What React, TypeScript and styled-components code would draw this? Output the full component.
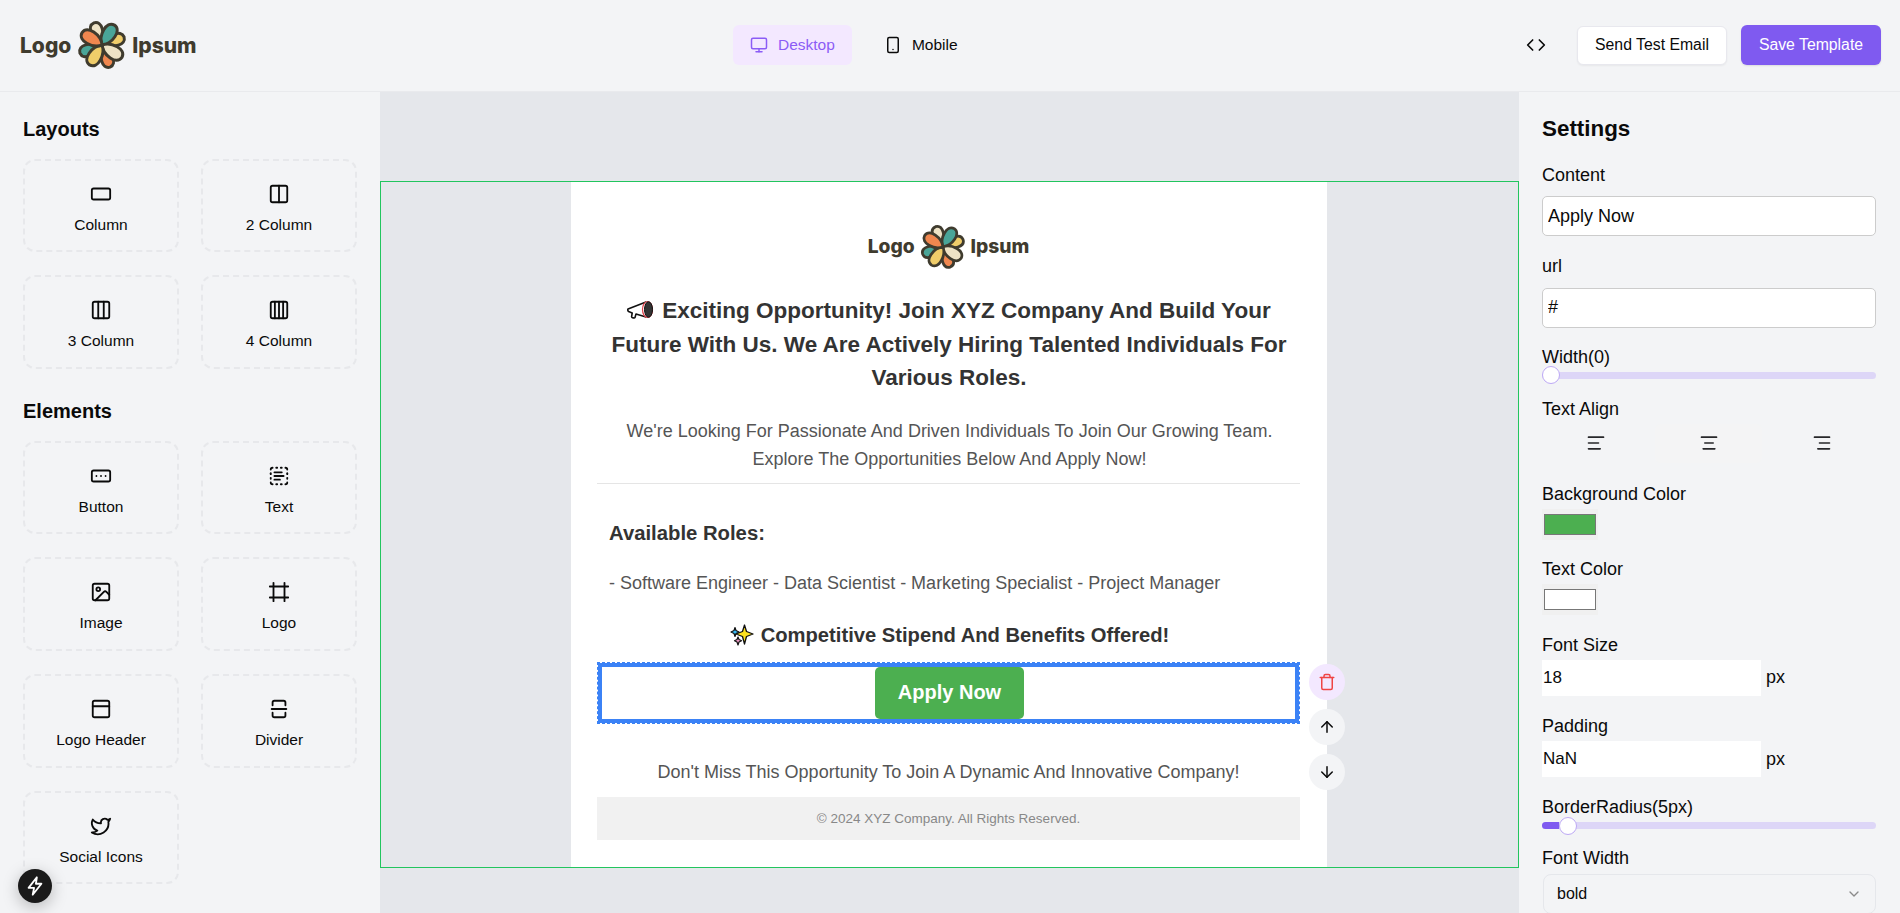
import React from "react";
import styled, { createGlobalStyle } from "styled-components";
import {
  RectangleHorizontal, Columns2, Columns3, Columns4, RectangleEllipsis, TextSelect, Image, Frame,
  PanelTop, SquareSplitVertical, Twitter, Monitor, Smartphone, Code, AlignLeft, AlignCenter, AlignRight,
  Trash, ArrowUp, ArrowDown, ChevronDown,
} from "lucide-react";

const Global = createGlobalStyle`
  html, body { margin: 0; padding: 0; height: 100%; overflow: hidden; }
  body { font-family: "Liberation Sans", Arial, sans-serif; color: #0a0a0a; background: #f3f4f6; }
  * { box-sizing: border-box; }
`;

const Page = styled.div`height: 913px; display: flex; flex-direction: column; overflow: hidden;`;
const Header = styled.header`
  height: 92px; flex: none; display: flex; justify-content: space-between; align-items: center;
  padding: 0 19px 1px 20px; background: #f3f4f6; border-bottom: 1px solid #e9eaed;
`;
const DeviceGroup = styled.div`display: flex; gap: 14px; margin-right: 15px;`;
const DeviceButton = styled.button<{ $active?: boolean }>`
  height: 40px; padding: 0 17.5px; display: flex; align-items: center; gap: 10px; border: 0; border-radius: 6px;
  font: 15.5px "Liberation Sans", Arial, sans-serif;
  background: ${(p) => (p.$active ? "#f3e8ff" : "transparent")};
  color: ${(p) => (p.$active ? "#8b5cf6" : "#0a0a0a")};
`;
const Actions = styled.div`display: flex; align-items: center; justify-content: flex-end;`;
const IconOnly = styled.div`display: flex; margin-right: 31px; color: #0a0a0a;`;
const OutlineButton = styled.button`
  width: 150px; height: 39px; margin-right: 14px; padding: 0; background: #fff; border: 1px solid #e8e8ee; border-radius: 6px;
  font: 15.8px "Liberation Sans", Arial, sans-serif; color: #0a0a0a; box-shadow: 0 1px 2px rgba(0,0,0,.05);
`;
const PrimaryButton = styled.button`
  width: 140px; height: 40px; padding: 0; background: #7f5af0; border: 0; border-radius: 6px; color: #fff;
  font: 15.8px "Liberation Sans", Arial, sans-serif; box-shadow: 0 1px 2px rgba(0,0,0,.1);
`;

const LogoWrap = styled.div<{ $scale: number }>`
  display: flex; align-items: center; gap: ${(p) => 5.5 * p.$scale}px;
  font-family: Inter, sans-serif; font-weight: 800; color: #3f3b2e;
  font-size: ${(p) => 21 * p.$scale}px; line-height: 1;
`;
const big = "M0 0C-8 -6 -9.5 -23 0 -23.5C9.5 -23 8 -6 0 0Z";
const small = "M0 -4C-7 -9 -8.5 -23 0 -23.500C8.500 -23 7 -9 0 -4Z";
const Flower = ({ size }: { size: number }) => (
  <svg width={size} height={size} viewBox="-25 -25 50 50" aria-hidden="true">
    {[[-20, "#eee3c6"], [70, "#f0cd6a"], [160, "#f0874f"], [250, "#4aa598"]].map(([r, c]) => (
      <path key={String(r)} d={small} fill={String(c)} stroke="#3f3b2e" strokeWidth="3" strokeLinejoin="round" transform={`rotate(${r})`} />
    ))}
    {[[32, "#4aa598"], [122, "#eee3c6"], [212, "#f0cd6a"], [302, "#f0874f"]].map(([r, c]) => (
      <path key={String(r)} d={big} fill={String(c)} stroke="#3f3b2e" strokeWidth="3" strokeLinejoin="round" transform={`rotate(${r})`} />
    ))}
  </svg>
);
const Logo = ({ scale }: { scale: number }) => (
  <LogoWrap $scale={scale}>
    <span>Logo</span>
    <Flower size={50 * scale} />
    <span>Ipsum</span>
  </LogoWrap>
);

const Body = styled.div`flex: 1; display: flex; min-height: 0;`;
const LeftPanel = styled.aside`width: 380px; flex: none; padding: 24.5px 23px 0; background: #f3f4f6; overflow: hidden;`;
const SectionTitle = styled.h2`margin: 0 0 18px; font-size: 20px; line-height: 24px; font-weight: 700;`;
const CardGrid = styled.div`
  display: grid; grid-template-columns: 156px 156px; grid-auto-rows: 93.5px; column-gap: 22px; row-gap: 23.2px;
  margin-bottom: 30px;
`;
const Card = styled.div`
  display: flex; flex-direction: column; align-items: center; gap: 11px; padding-top: 22px;
  border: 2px dashed #e7e8eb; border-radius: 12px; font-size: 15.5px; line-height: 18px; color: #0a0a0a;
`;
const IconBox = styled.span`display: flex; height: 22px;`;

const Canvas = styled.main`flex: 1; min-width: 0; padding-top: 89px; background: #e5e7eb;`;
const Frame1 = styled.div`height: 687px; border: 1px solid #22c55e; display: flex; justify-content: center;`;
const Email = styled.div`width: 756px; margin-left: -1px; background: #fff; padding: 42px 27px 0 26px; display: flex; flex-direction: column;`;
const EmailLogo = styled.div`display: flex; justify-content: center; height: 46px; margin-bottom: 24px; align-items: center;`;
const Headline = styled.h1`
  margin: 0 0 22px; padding: 0 12px 0 13px; font-size: 22.5px; line-height: 33.5px; font-weight: 700; color: #333;
  text-align: center;
`;
const Sub = styled.p`margin: 0; padding: 0 10px 0 12px; font-size: 18px; line-height: 28px; color: #555; text-align: center;`;
const Rule = styled.hr`margin: 10px 0 0; height: 1px; border: 0; background: #e5e5e5;`;
const RolesTitle = styled.h3`margin: 37px 0 0; padding-left: 12px; font-size: 20.3px; line-height: 24px; color: #333; font-weight: 700;`;
const RolesText = styled.p`margin: 26px 0 0; padding-left: 12px; font-size: 18px; line-height: 24px; color: #555;`;
const Stipend = styled.h3`margin: 28px 0 0; padding-left: 2px; font-size: 20.2px; line-height: 24px; font-weight: 700; color: #333; text-align: center; display: flex; justify-content: center; align-items: center; gap: 7px;`;
const Selected = styled.div`
  position: relative; margin-top: 15px; height: 62px; border: 1px dashed #3b82f6;
  display: flex;
`;
const SelectedInner = styled.div`flex: 1; border: 4px solid #3b82f6; display: flex; justify-content: center;`;
const CtaButton = styled.a`
  width: 149px; height: 52px; margin-left: 2px; display: flex; align-items: center; justify-content: center; background: #4caf50;
  color: #fff; font-size: 20px; font-weight: 700; border-radius: 5px; text-decoration: none;
`;
const SideTools = styled.div`position: absolute; left: 711px; top: 1px; display: flex; flex-direction: column; gap: 9px;`;
const RoundTool = styled.button<{ $danger?: boolean }>`
  width: 36px; height: 36px; border-radius: 50%; border: 0; padding: 0; display: flex; align-items: center; justify-content: center;
  background: ${(p) => (p.$danger ? "#f3e8ff" : "#f3f4f6")}; color: ${(p) => (p.$danger ? "#ef4444" : "#0a0a0a")};
`;
const Closing = styled.p`margin: 36px 0 0; font-size: 18px; line-height: 24px; color: #555; text-align: center;`;
const Copyright = styled.div`
  margin-top: 13px; height: 43px; background: #f1f1f1; color: #888; font-size: 13.5px; display: flex; align-items: center; justify-content: center;
`;

const RightPanel = styled.aside`width: 381px; flex: none; padding: 23px 24px 0 23px; background: #f3f4f6; overflow: hidden;`;
const SettingsTitle = styled.h2`margin: 0 0 21.5px; font-size: 22.4px; line-height: 28px; font-weight: 700;`;
const Field = styled.div<{ $gap: number }>`margin-bottom: ${(p) => p.$gap}px;`;
const Label = styled.div`font-size: 18px; line-height: 21px; color: #0a0a0a;`;
const TextInput = styled.input`
  display: block; width: 334px; height: 40px; margin-top: 10.5px; padding: 0 5px; border: 1px solid #ccc; border-radius: 5px;
  background: #fff; font: 18px "Liberation Sans", Arial, sans-serif; color: #0a0a0a;
`;
const SliderTrack = styled.div`position: relative; width: 334px; height: 7px; margin-top: 4px; border-radius: 4px; background: #ddd6f7;`;
const SliderFill = styled.div`height: 100%; border-radius: 4px 0 0 4px; background: #7f5af0;`;
const SliderThumb = styled.div`
  position: absolute; top: -5.5px; width: 18px; height: 18px; border-radius: 50%; background: #fff; border: 1px solid #bda9f5;
  transform: translateX(-50%);
`;
const AlignRow = styled.div`display: grid; grid-template-columns: repeat(3, 107px); column-gap: 6px; margin-top: 3.5px;`;
const AlignCell = styled.div<{ $active?: boolean }>`
  height: 39px; display: flex; align-items: center; justify-content: center; border-radius: 6px; color: #27272a;
  background: ${(p) => (p.$active ? "#f4f4f5" : "transparent")};
`;
const ColorInput = styled.input`
  display: block; width: 56px; height: 31px; margin-top: 4px; padding: 1px 0; border: 0; background: #f0f0f0;
`;
const NumberRow = styled.div`display: flex; align-items: center; gap: 5px; margin-top: 4px; font-size: 18px;`;
const NumberInput = styled.input`
  width: 219px; height: 36px; padding: 0 1px; border: 0; background: #fff; font: 17px "Liberation Sans", Arial, sans-serif; color: #0a0a0a;
`;
const SelectBox = styled.div`
  width: 333px; height: 40px; margin: 5px 0 0 1px; padding: 0 13px; display: flex; align-items: center; justify-content: space-between;
  border: 1px solid #e5e7eb; border-radius: 8px; font-size: 16px; color: #0a0a0a;
`;
const Badge = styled.div`
  position: fixed; left: 18px; bottom: 10px; width: 34px; height: 34px; border-radius: 50%; background: #1a1a1a;
  display: flex; align-items: center; justify-content: center; box-shadow: 0 4px 16px rgba(0,0,0,.25);
`;

const Megaphone = () => (
  <svg width="27" height="20" viewBox="0 0 27 20" aria-hidden="true" style={{ verticalAlign: -2, marginRight: 8 }}>
    <path d="M1 9 19 2v15L9 14l-1 3.5c-.4 1-3.4.3-3.4-.8l.6-3.7-3.6-1.4C.8 11 .5 9.500 1 9Z" fill="#fff" stroke="#111" strokeWidth="1.6" strokeLinejoin="round" />
    <ellipse cx="20.500" cy="9.500" rx="5" ry="8" fill="#fff" stroke="#e0414a" strokeWidth="1.2" />
    <ellipse cx="21.500" cy="9.500" rx="4" ry="7.800" fill="#333" stroke="#111" />
  </svg>
);
const Sparkle = () => (
  <svg width="24" height="22" viewBox="0 0 24 22" aria-hidden="true">
    <path d="M14.500 1 16.500 7.500 23 10 16.500 12.500 14.500 20 12.500 12.500 6 10 12.500 7.500Z" fill="#ffe21f" stroke="#111" strokeWidth="1.300" strokeLinejoin="round" />
    <path d="M5 3.500 6 6.500 9 8 6 9.500 5 12.500 4 9.500 1 8 4 6.500Z" fill="#38bdf8" stroke="#111" strokeWidth="1.200" strokeLinejoin="round" />
    <path d="M8 13 9 15.500 11.500 16.800 9 18 8 21 7 18 4.500 16.800 7 15.500Z" fill="#f19ac6" stroke="#111" strokeWidth="1.200" strokeLinejoin="round" />
  </svg>
);
const Bolt = () => (
  <svg width="22" height="22" viewBox="0 0 24 24" fill="none" stroke="#fff" strokeWidth="2" strokeLinejoin="round" aria-hidden="true">
    <path d="M14 2.500 5 14h6l-1.500 7.500L19 9.500h-6l1-7Z" />
  </svg>
);

const layouts = [
  { label: "Column", Icon: RectangleHorizontal },
  { label: "2 Column", Icon: Columns2 },
  { label: "3 Column", Icon: Columns3 },
  { label: "4 Column", Icon: Columns4 },
];
const elements = [
  { label: "Button", Icon: RectangleEllipsis },
  { label: "Text", Icon: TextSelect },
  { label: "Image", Icon: Image },
  { label: "Logo", Icon: Frame },
  { label: "Logo Header", Icon: PanelTop },
  { label: "Divider", Icon: SquareSplitVertical },
  { label: "Social Icons", Icon: Twitter },
];

const Slider = ({ pct }: { pct: number }) => (
  <SliderTrack>
    <SliderFill style={{ width: `${pct}px` }} />
    <SliderThumb style={{ left: `${pct + 9}px` }} />
  </SliderTrack>
);

export default function App() {
  return (
    <Page>
      <Global />
      <Header>
        <Logo scale={1} />
        <DeviceGroup>
          <DeviceButton $active><Monitor size={18} />Desktop</DeviceButton>
          <DeviceButton><Smartphone size={18} />Mobile</DeviceButton>
        </DeviceGroup>
        <Actions>
          <IconOnly><Code size={20} /></IconOnly>
          <OutlineButton>Send Test Email</OutlineButton>
          <PrimaryButton>Save Template</PrimaryButton>
        </Actions>
      </Header>
      <Body>
        <LeftPanel>
          <SectionTitle>Layouts</SectionTitle>
          <CardGrid>
            {layouts.map(({ label, Icon }) => (
              <Card key={label}><IconBox><Icon size={22} strokeWidth={2} /></IconBox>{label}</Card>
            ))}
          </CardGrid>
          <SectionTitle>Elements</SectionTitle>
          <CardGrid>
            {elements.map(({ label, Icon }) => (
              <Card key={label}><IconBox><Icon size={22} strokeWidth={2} /></IconBox>{label}</Card>
            ))}
          </CardGrid>
        </LeftPanel>
        <Canvas>
          <Frame1>
            <Email>
              <EmailLogo><Logo scale={0.915} /></EmailLogo>
              <Headline>
                <Megaphone />Exciting Opportunity! Join XYZ Company And Build Your Future With Us. We Are Actively Hiring Talented Individuals For Various Roles.
              </Headline>
              <Sub>We're Looking For Passionate And Driven Individuals To Join Our Growing Team. Explore The Opportunities Below And Apply Now!</Sub>
              <Rule />
              <RolesTitle>Available Roles:</RolesTitle>
              <RolesText>- Software Engineer - Data Scientist - Marketing Specialist - Project Manager</RolesText>
              <Stipend><Sparkle />Competitive Stipend And Benefits Offered!</Stipend>
              <Selected>
                <SelectedInner><CtaButton href="#">Apply Now</CtaButton></SelectedInner>
                <SideTools>
                  <RoundTool $danger><Trash size={18} /></RoundTool>
                  <RoundTool><ArrowUp size={18} /></RoundTool>
                  <RoundTool><ArrowDown size={18} /></RoundTool>
                </SideTools>
              </Selected>
              <Closing>Don't Miss This Opportunity To Join A Dynamic And Innovative Company!</Closing>
              <Copyright>© 2024 XYZ Company. All Rights Reserved.</Copyright>
            </Email>
          </Frame1>
        </Canvas>
        <RightPanel>
          <SettingsTitle>Settings</SettingsTitle>
          <Field $gap={20}><Label>Content</Label><TextInput defaultValue="Apply Now" /></Field>
          <Field $gap={19}><Label>url</Label><TextInput defaultValue="#" /></Field>
          <Field $gap={20.5}><Label>Width(0)</Label><Slider pct={0} /></Field>
          <Field $gap={21}>
            <Label>Text Align</Label>
            <AlignRow>
              <AlignCell><AlignLeft size={20} /></AlignCell>
              <AlignCell $active><AlignCenter size={20} /></AlignCell>
              <AlignCell><AlignRight size={20} /></AlignCell>
            </AlignRow>
          </Field>
          <Field $gap={19.5}><Label>Background Color</Label><ColorInput type="color" defaultValue="#4caf50" /></Field>
          <Field $gap={19.5}><Label>Text Color</Label><ColorInput type="color" defaultValue="#ffffff" /></Field>
          <Field $gap={20.5}><Label>Font Size</Label><NumberRow><NumberInput defaultValue="18" />px</NumberRow></Field>
          <Field $gap={20}><Label>Padding</Label><NumberRow><NumberInput defaultValue="NaN" />px</NumberRow></Field>
          <Field $gap={19}><Label>BorderRadius(5px)</Label><Slider pct={17} /></Field>
          <Field $gap={0}><Label>Font Width</Label><SelectBox>bold<ChevronDown size={16} color="#8a8a8a" /></SelectBox></Field>
        </RightPanel>
      </Body>
      <Badge><Bolt /></Badge>
    </Page>
  );
}
